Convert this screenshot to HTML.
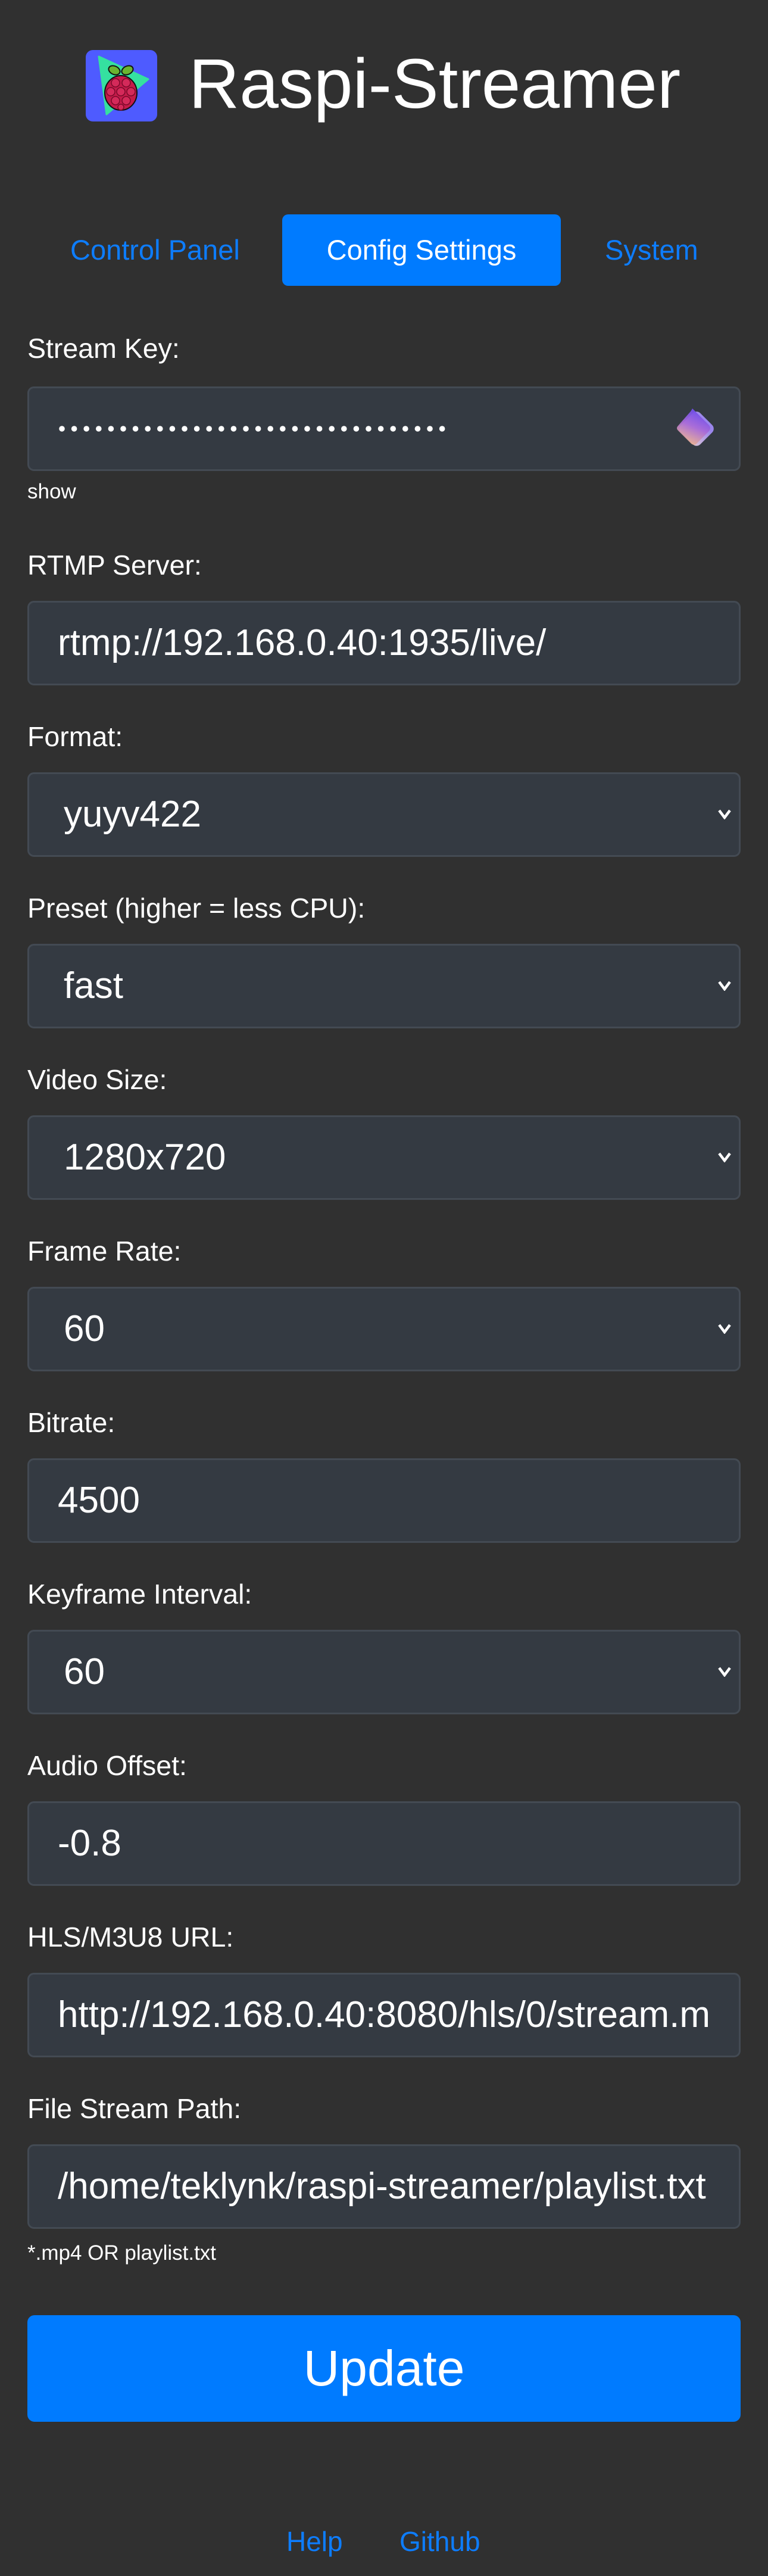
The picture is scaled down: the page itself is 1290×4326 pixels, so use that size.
<!DOCTYPE html>
<html><head><meta charset="utf-8">
<style>
*{margin:0;padding:0;box-sizing:border-box}
html,body{width:1290px;height:4326px;background:#303030;overflow:hidden}
body{position:relative;font-family:"Liberation Sans",Arial,sans-serif;color:#fff}
.abs{position:absolute}
.title{left:317px;top:76px;font-size:118px;line-height:130px;white-space:nowrap}
.tab{top:360px;height:120px;line-height:120px;font-size:47px;color:#0d7dff;white-space:nowrap}
.lbl{left:46px;font-size:46.5px;line-height:52px;white-space:nowrap}
.inp{left:46px;width:1198px;height:142px;background:#343a42;border:3px solid #434a53;border-radius:11px;font-size:62px;line-height:136px;padding-left:48px;white-space:nowrap;overflow:hidden}
.sel{padding-left:58px}
.chev{position:absolute;right:10px;top:58px}
.small{left:46px;font-size:35px;line-height:40px;white-space:nowrap}
.clip{width:1098px;overflow:hidden}
</style></head><body>

<svg class="abs" style="left:144px;top:84px" width="120" height="120" viewBox="0 0 120 120">
<rect width="120" height="120" rx="12" fill="#4e5bff"/>
<polygon points="22,11 105,49 35,108" fill="#35e0a0" stroke="#35e0a0" stroke-width="3" stroke-linejoin="round"/>
<g stroke="#111" stroke-width="2">
<ellipse cx="48" cy="34" rx="10" ry="7" fill="#6ab430" transform="rotate(25 48 34)"/>
<ellipse cx="70" cy="34" rx="10" ry="7" fill="#6ab430" transform="rotate(-25 70 34)"/>
<ellipse cx="59" cy="72" rx="27" ry="29" fill="#c51a4a"/>
</g>
<g fill="#d42a5a" stroke="#7a0a2a" stroke-width="1.5">
<circle cx="50" cy="55" r="7"/><circle cx="68" cy="55" r="7"/>
<circle cx="42" cy="70" r="7"/><circle cx="59" cy="70" r="7"/><circle cx="76" cy="70" r="7"/>
<circle cx="50" cy="85" r="7"/><circle cx="68" cy="85" r="7"/><circle cx="59" cy="96" r="5"/>
</g>
</svg>
<div class="abs title">Raspi-Streamer</div>

<div class="abs tab" style="left:118px">Control Panel</div>
<div class="abs tab" style="left:474px;width:468px;background:#007bff;color:#fff;border-radius:10px;text-align:center">Config Settings</div>
<div class="abs tab" style="left:1016px">System</div>

<div class="abs lbl" style="top:559px">Stream Key:</div>
<div class="abs inp" style="top:649px"></div>
<svg class="abs" style="left:90px;top:710px" width="660" height="20" viewBox="0 0 660 20" fill="#fff">
<circle cx="14" cy="10" r="4.8"/><circle cx="34.6" cy="10" r="4.8"/><circle cx="55.2" cy="10" r="4.8"/><circle cx="75.8" cy="10" r="4.8"/><circle cx="96.4" cy="10" r="4.8"/><circle cx="117" cy="10" r="4.8"/><circle cx="137.6" cy="10" r="4.8"/><circle cx="158.2" cy="10" r="4.8"/><circle cx="178.8" cy="10" r="4.8"/><circle cx="199.4" cy="10" r="4.8"/><circle cx="220" cy="10" r="4.8"/><circle cx="240.6" cy="10" r="4.8"/><circle cx="261.2" cy="10" r="4.8"/><circle cx="281.8" cy="10" r="4.8"/><circle cx="302.4" cy="10" r="4.8"/><circle cx="323" cy="10" r="4.8"/><circle cx="343.6" cy="10" r="4.8"/><circle cx="364.2" cy="10" r="4.8"/><circle cx="384.8" cy="10" r="4.8"/><circle cx="405.4" cy="10" r="4.8"/><circle cx="426" cy="10" r="4.8"/><circle cx="446.6" cy="10" r="4.8"/><circle cx="467.2" cy="10" r="4.8"/><circle cx="487.8" cy="10" r="4.8"/><circle cx="508.4" cy="10" r="4.8"/><circle cx="529" cy="10" r="4.8"/><circle cx="549.6" cy="10" r="4.8"/><circle cx="570.2" cy="10" r="4.8"/><circle cx="590.8" cy="10" r="4.8"/><circle cx="611.4" cy="10" r="4.8"/><circle cx="632" cy="10" r="4.8"/><circle cx="652.6" cy="10" r="4.8"/>
</svg>
<svg class="abs" style="left:1133px;top:683px" width="74" height="74" viewBox="0 0 74 74">
<defs>
<linearGradient id="g1" x1="0.3" y1="1" x2="0.7" y2="0"><stop offset="0" stop-color="#f1b98a"/><stop offset="0.5" stop-color="#a86ad8"/><stop offset="1" stop-color="#6448f0"/></linearGradient>
<linearGradient id="g2" x1="0" y1="1" x2="0.3" y2="0"><stop offset="0" stop-color="#f0d8d0"/><stop offset="1" stop-color="#9a86ec"/></linearGradient>
</defs>
<rect x="14" y="14" width="46" height="46" rx="9" fill="url(#g2)" transform="rotate(45 37 37)"/>
<path d="M30 3 L58 31 Q62 36 58 41 L37 62 Q33 66 28 62 L6 40 Q2 36 6 32 L27 8 Q29 5 30 3Z" fill="url(#g1)" opacity="0.95"/>
</svg>
<div class="abs small" style="top:806px">show</div>

<div class="abs lbl" style="top:923px">RTMP Server:</div>
<div class="abs inp" style="top:1009px">rtmp://192.168.0.40:1935/live/</div>

<div class="abs lbl" style="top:1211px">Format:</div>
<div class="abs inp sel" style="top:1297px">yuyv422<svg class="chev" width="28" height="18" viewBox="0 0 28 18"><path d="M5 3 L14 15 L23 3" stroke="#fff" stroke-width="4.5" fill="none"/></svg></div>

<div class="abs lbl" style="top:1499px">Preset (higher = less CPU):</div>
<div class="abs inp sel" style="top:1585px">fast<svg class="chev" width="28" height="18" viewBox="0 0 28 18"><path d="M5 3 L14 15 L23 3" stroke="#fff" stroke-width="4.5" fill="none"/></svg></div>

<div class="abs lbl" style="top:1787px">Video Size:</div>
<div class="abs inp sel" style="top:1873px">1280x720<svg class="chev" width="28" height="18" viewBox="0 0 28 18"><path d="M5 3 L14 15 L23 3" stroke="#fff" stroke-width="4.5" fill="none"/></svg></div>

<div class="abs lbl" style="top:2075px">Frame Rate:</div>
<div class="abs inp sel" style="top:2161px">60<svg class="chev" width="28" height="18" viewBox="0 0 28 18"><path d="M5 3 L14 15 L23 3" stroke="#fff" stroke-width="4.5" fill="none"/></svg></div>

<div class="abs lbl" style="top:2363px">Bitrate:</div>
<div class="abs inp" style="top:2449px">4500</div>

<div class="abs lbl" style="top:2651px">Keyframe Interval:</div>
<div class="abs inp sel" style="top:2737px">60<svg class="chev" width="28" height="18" viewBox="0 0 28 18"><path d="M5 3 L14 15 L23 3" stroke="#fff" stroke-width="4.5" fill="none"/></svg></div>

<div class="abs lbl" style="top:2939px">Audio Offset:</div>
<div class="abs inp" style="top:3025px">-0.8</div>

<div class="abs lbl" style="top:3227px">HLS/M3U8 URL:</div>
<div class="abs inp" style="top:3313px"><div class="clip">http://192.168.0.40:8080/hls/0/stream.m3u8</div></div>

<div class="abs lbl" style="top:3515px">File Stream Path:</div>
<div class="abs inp" style="top:3601px"><div class="clip">/home/teklynk/raspi-streamer/playlist.txt</div></div>
<div class="abs small" style="top:3764px">*.mp4 OR playlist.txt</div>

<div class="abs" style="left:46px;top:3888px;width:1198px;height:179px;background:#007bff;border-radius:12px;text-align:center;font-size:84px;line-height:179px">Update</div>

<div class="abs" style="left:481px;top:4240px;font-size:46px;line-height:56px;color:#0d7dff">Help</div>
<div class="abs" style="left:671px;top:4240px;font-size:46px;line-height:56px;color:#0d7dff">Github</div>
</body></html>
